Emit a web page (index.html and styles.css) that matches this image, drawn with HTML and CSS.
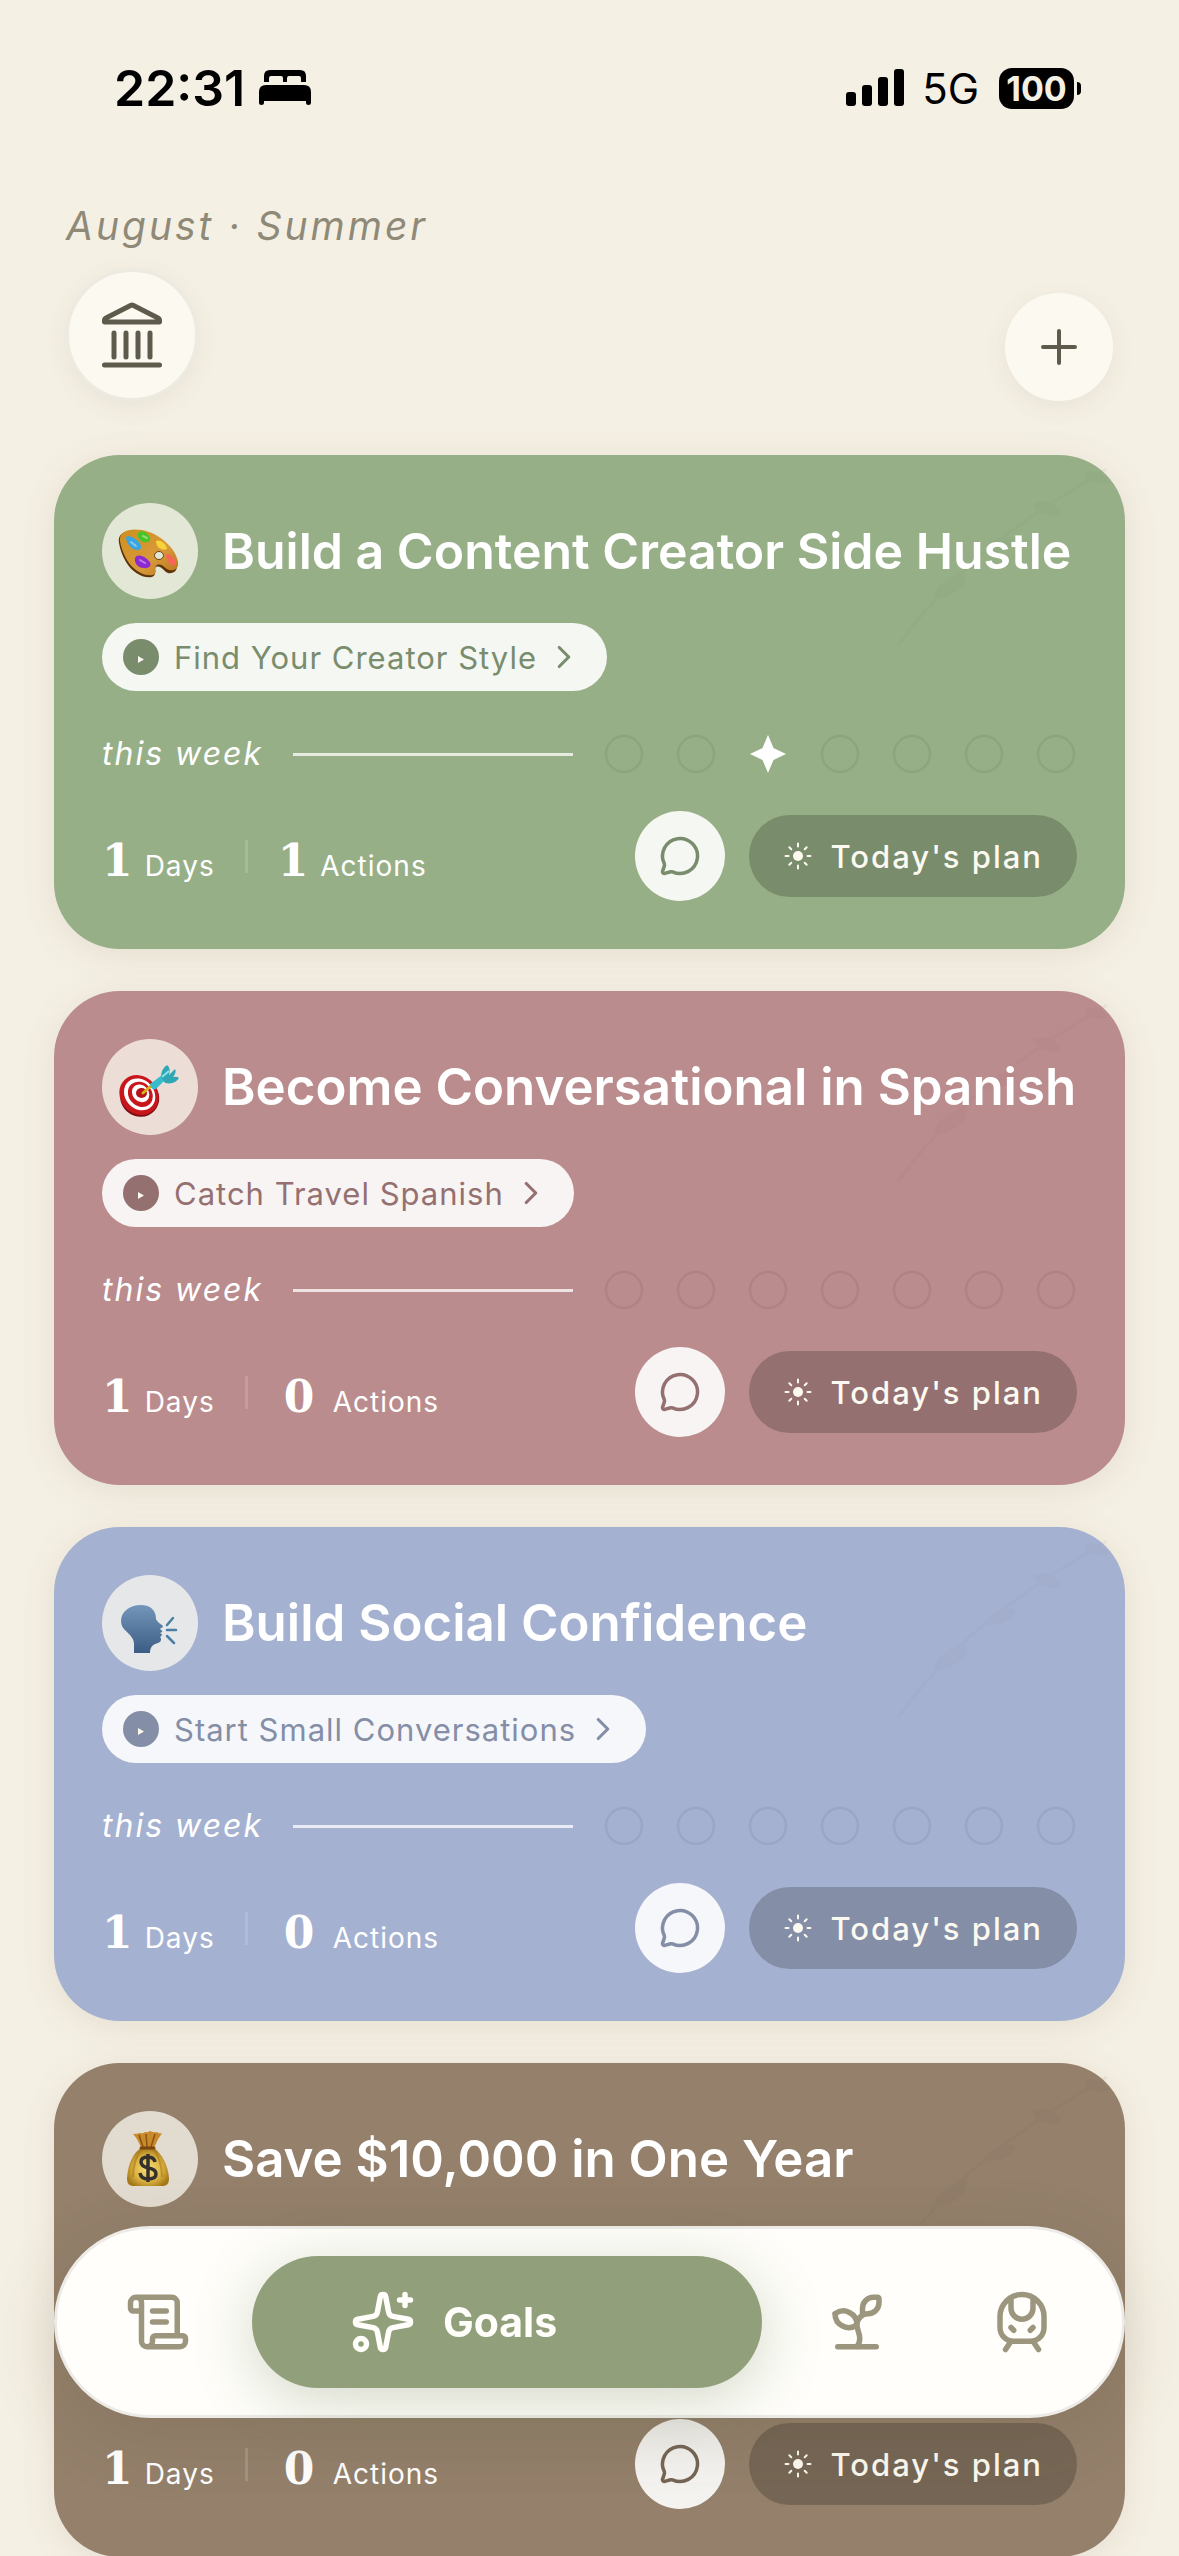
FILE: index.html
```html
<!DOCTYPE html>
<html lang="en">
<head>
<meta charset="utf-8">
<meta name="viewport" content="width=device-width, initial-scale=1">
<title>Goals</title>
<link rel="stylesheet" href="styles.css">
</head>
<body>

<svg class="sprite" aria-hidden="true">
  <symbol id="play" viewBox="0 0 36 36"><path d="M15 17v7l6-3.500z" fill="currentColor"/></symbol>
  <symbol id="chevron" viewBox="0 0 24 24"><path d="m9 18 6-6-6-6" class="line"/></symbol>
  <symbol id="ring" viewBox="0 0 42 42"><circle cx="21" cy="21" r="18" fill="none" stroke="currentColor" stroke-width="2.500"/></symbol>
  <symbol id="star" viewBox="0 0 42 42"><path d="M21 2l5.500 13L39 21l-12.500 6L21 40l-5.500-13L3 21l12.500-6z" fill="currentColor"/></symbol>
  <symbol id="chat" viewBox="0 0 24 24"><path class="line" d="M2.992 16.342a2 2 0 0 1 .094 1.167l-1.065 3.290a1 1 0 0 0 1.236 1.168l3.413-.998a2 2 0 0 1 1.099.092 10 10 0 1 0-4.777-4.719"/></symbol>
  <symbol id="sun" viewBox="0 0 30 30"><circle cx="15" cy="15" r="5" fill="currentColor"/><path class="line" d="M15 2.500v3M15 24.500v3M2.500 15h3M24.500 15h3M6.300 6.300l2 2M21.700 21.700l2 2M6.300 23.700l2-2M21.700 8.300l2-2"/></symbol>
  <symbol id="branch" viewBox="0 0 240 200">
    <path d="M13 191C60 125 110 80 222 14" fill="none" stroke="currentColor" stroke-width="3"/>
    <g fill="currentColor">
      <path d="M50 143c0-13 14-24 32-25 1 12-13 25-32 25z"/>
      <path d="M101 97c3-12 17-18 30-14-2 10-16 17-30 14z"/>
      <path d="M148 50c8-7 25-4 29 9-10 4-25 1-29-9z"/>
      <path d="M199 18c8-4 21 0 25 9-9 3-21 1-25-9z"/>
    </g>
  </symbol>
  <linearGradient id="head-fill" x1="0" y1="0" x2="0" y2="1"><stop offset="0" stop-color="#7496ba"/><stop offset="1" stop-color="#3b5c84"/></linearGradient>
  <radialGradient id="gold" cx=".5" cy=".55" r=".55"><stop offset="0" stop-color="#f7e07e"/><stop offset=".6" stop-color="#dcb442"/><stop offset="1" stop-color="#a5781a"/></radialGradient>
  <linearGradient id="wood" x1="0" y1="0" x2="1" y2="1"><stop offset="0" stop-color="#cf8f1f"/><stop offset=".6" stop-color="#d89a3a"/><stop offset="1" stop-color="#b9741b"/></linearGradient>
</svg>

<div class="status">
  <div class="status-side">
    <span class="clock">22:31</span>
    <svg class="bed" viewBox="0 0 52 36" aria-hidden="true"><path d="M5 12V6q0-6 6-6h30q6 0 6 6v6h-5V8q0-2-2-2h-10q-2 0-2 2v4h-4V8q0-2-2-2H12q-2 0-2 2v4zM0 22q0-7 7-7h38q7 0 7 7v11q0 2-2.500 2T47 33v-2H5v2q0 2-2.500 2T0 33z"/></svg>
  </div>
  <div class="status-side">
    <svg class="signal" viewBox="0 0 58 38" aria-hidden="true"><rect y="23" width="10" height="14" rx="3"/><rect x="16" y="16" width="10" height="21" rx="3"/><rect x="32" y="8" width="10" height="29" rx="3"/><rect x="48" width="10" height="37" rx="3"/></svg>
    <span class="network">5G</span>
    <span class="battery">100</span>
  </div>
</div>

<header class="top">
  <p class="season">August · Summer</p>
  <div class="top-actions">
    <button class="round round-lg" aria-label="Hall">
      <svg class="hall" viewBox="0 0 60 66" aria-hidden="true"><path class="line" d="M29 3.200Q30 2.700 31 3.200L56 16q2 1 1.500 4H2.500q-.500-3 1.500-4zM12 31v24M24 31v24M36 31v24M48 31v24M2.500 63h55"/></svg>
    </button>
    <button class="round" aria-label="Add goal">
      <svg class="plus" viewBox="0 0 36 36" aria-hidden="true"><path class="line" d="M18 2v32M2 18h32"/></svg>
    </button>
  </div>
</header>

<main class="goals">
  <article class="card green">
    <svg class="branch" aria-hidden="true"><use href="#branch"/></svg>
    <div class="card-head">
      <span class="badge"><svg viewBox="0 0 96 96" role="img" aria-label="Palette">
        <path d="M18 39c-2-11 9-14 22-12 17 3 34 18 36 33 1 7-4 10-9 9-5-2-7-8-12-6-4 2 2 8-4 10-9 2-20-5-26-15-4-7-6-13-7-19z" fill="#5c3407" transform="translate(-1 1)"/>
        <path d="M18 38c-1-10 9-13 22-11 17 3 34 18 36 32 1 7-4 9-9 8-5-2-7-7-12-5-4 2 2 8-4 10-9 2-20-5-26-15-4-7-6-13-7-19z" fill="url(#wood)"/>
        <ellipse cx="57" cy="52.500" rx="4.500" ry="4" fill="#e2e6d7" stroke="#6f420c"/>
        <path d="M24 34c4-2 8 1 12 4 4 4 4 9 0 9-5 1-12-6-12-13z" fill="#38a6e0"/>
        <path d="M36 30c4-4 10 0 12 5 1 4-3 5-7 4-4-2-6-5-5-9z" fill="#46c428"/>
        <path d="M54 38c4-2 10 2 11 8-4 2-11-1-11-8z" fill="#f8d43a"/>
        <path d="M33 55c2-5 10-2 14 3 4 4 0 8-5 7-6 0-10-5-9-10z" fill="#8d2bd0"/>
        <path d="M64 51c5 0 10 5 10 11-4 2-10-4-10-11z" fill="#f8645a"/>
        <path d="M29 39l5 4M41 33l4 2M38 57l5 3" stroke="#fff" stroke-opacity=".4" stroke-width="2" stroke-linecap="round"/>
      </svg></span>
      <h2 class="long">Build a Content Creator Side Hustle</h2>
    </div>
    <button class="step"><svg class="play" aria-hidden="true"><use href="#play"/></svg><span>Find Your Creator Style</span><svg class="chevron" aria-hidden="true"><use href="#chevron"/></svg></button>
    <div class="week"><span class="week-label">this week</span><hr>
      <div class="days"><svg><use href="#ring"/></svg><svg><use href="#ring"/></svg><svg class="done"><use href="#star"/></svg><svg><use href="#ring"/></svg><svg><use href="#ring"/></svg><svg><use href="#ring"/></svg><svg><use href="#ring"/></svg></div>
    </div>
    <div class="card-foot">
      <div class="stats"><p class="stat"><b>1</b> <span>Days</span></p><i class="bar"></i><p class="stat"><b>1</b> <span>Actions</span></p></div>
      <button class="chat" aria-label="Chat"><svg aria-hidden="true"><use href="#chat"/></svg></button>
      <button class="plan"><svg aria-hidden="true"><use href="#sun"/></svg>Today's plan</button>
    </div>
  </article>

  <article class="card rose">
    <svg class="branch" aria-hidden="true"><use href="#branch"/></svg>
    <div class="card-head">
      <span class="badge"><svg viewBox="0 0 96 96" role="img" aria-label="Target">
        <ellipse cx="38" cy="58.500" rx="20" ry="19" transform="rotate(42 38 58)" fill="#7c0d12"/>
        <ellipse cx="37" cy="56" rx="21" ry="18.500" transform="rotate(48 37 56)" fill="#c9151c"/>
        <ellipse cx="38" cy="55.500" rx="17" ry="14.500" transform="rotate(48 38 55)" fill="#fff"/>
        <ellipse cx="38.500" cy="55" rx="13.500" ry="11.500" transform="rotate(48 38 55)" fill="#c9151c"/>
        <ellipse cx="39" cy="54.500" rx="9.500" ry="8" transform="rotate(48 39 54)" fill="#fff"/>
        <ellipse cx="39.500" cy="54" rx="5.500" ry="5" fill="#b51219"/>
        <path d="M41 54l9-8" stroke="#d8b51f" stroke-width="3" stroke-linecap="round"/>
        <path d="M48 45l12-9 4 4-10 10q-5 2-6-5z" fill="#38bccb"/>
        <path d="M59 38q0-8 6-12 4 3 2 10l6-6q2 3-2 8 4-1 6 1-4 7-14 5z" fill="#2fa7b4"/>
        <path d="M60 38l7-6" stroke="#8be4ea" stroke-width="2"/>
      </svg></span>
      <h2>Become Conversational in Spanish</h2>
    </div>
    <button class="step"><svg class="play" aria-hidden="true"><use href="#play"/></svg><span>Catch Travel Spanish</span><svg class="chevron" aria-hidden="true"><use href="#chevron"/></svg></button>
    <div class="week"><span class="week-label">this week</span><hr>
      <div class="days"><svg><use href="#ring"/></svg><svg><use href="#ring"/></svg><svg><use href="#ring"/></svg><svg><use href="#ring"/></svg><svg><use href="#ring"/></svg><svg><use href="#ring"/></svg><svg><use href="#ring"/></svg></div>
    </div>
    <div class="card-foot">
      <div class="stats"><p class="stat"><b>1</b> <span>Days</span></p><i class="bar"></i><p class="stat"><b class="zero">0</b> <span>Actions</span></p></div>
      <button class="chat" aria-label="Chat"><svg aria-hidden="true"><use href="#chat"/></svg></button>
      <button class="plan"><svg aria-hidden="true"><use href="#sun"/></svg>Today's plan</button>
    </div>
  </article>

  <article class="card blue">
    <svg class="branch" aria-hidden="true"><use href="#branch"/></svg>
    <div class="card-head">
      <span class="badge"><svg viewBox="0 0 96 96" role="img" aria-label="Speaking head">
        <path d="M32 78V69c0-5-3-8-7-12-4-3-6-7-6-11 0-9 8-16 20-16 10 0 15 6 15 14 1 3 5 5 7 7 0 2-3 2-3 3 1 1 3 2 2 3l-2 1c3 1 2 3 0 4 2 2 1 5-2 6-4 1-8 3-8 10z" fill="url(#head-fill)"/>
        <path d="M65 50l6-7M65 55h9M65 61l7 7" stroke="#4a80a8" stroke-width="2.500" stroke-linecap="round"/>
      </svg></span>
      <h2>Build Social Confidence</h2>
    </div>
    <button class="step"><svg class="play" aria-hidden="true"><use href="#play"/></svg><span>Start Small Conversations</span><svg class="chevron" aria-hidden="true"><use href="#chevron"/></svg></button>
    <div class="week"><span class="week-label">this week</span><hr>
      <div class="days"><svg><use href="#ring"/></svg><svg><use href="#ring"/></svg><svg><use href="#ring"/></svg><svg><use href="#ring"/></svg><svg><use href="#ring"/></svg><svg><use href="#ring"/></svg><svg><use href="#ring"/></svg></div>
    </div>
    <div class="card-foot">
      <div class="stats"><p class="stat"><b>1</b> <span>Days</span></p><i class="bar"></i><p class="stat"><b class="zero">0</b> <span>Actions</span></p></div>
      <button class="chat" aria-label="Chat"><svg aria-hidden="true"><use href="#chat"/></svg></button>
      <button class="plan"><svg aria-hidden="true"><use href="#sun"/></svg>Today's plan</button>
    </div>
  </article>

  <article class="card brown">
    <svg class="branch" aria-hidden="true"><use href="#branch"/></svg>
    <div class="card-head">
      <span class="badge"><svg viewBox="0 0 96 96" role="img" aria-label="Money bag">
        <path d="M39 37q-3-9-8-14 4 0 7-1 3 1 5-1 2 1 5-1 4 2 7 1 2 2 5 1-5 7-8 15z" fill="#c88a2b"/>
        <path d="M41 36l-4-12M45 36l-1-13M49 36l4-13" stroke="#8a5313" stroke-width="1.500"/>
        <path d="M39 37h13c8 6 14 17 15 30 0 6-2 8-7 8H32c-5 0-7-2-7-8 1-14 6-25 14-30z" fill="url(#gold)"/>
        <path d="M31 66q0-16 8-27M60 66q0-16-8-27" stroke="#a97a1c" stroke-opacity=".6" stroke-width="2" fill="none"/>
        <path d="M39 37h13" stroke="#7a4510" stroke-width="3" stroke-linecap="round"/>
        <path d="M46 43v28M53 51q-1-5-7-5-7 0-7 5 0 4 7 6 8 1 8 6 0 5-8 5-7 0-8-6" stroke="#33302e" stroke-width="3.500" fill="none"/>
      </svg></span>
      <h2>Save $10,000 in One Year</h2>
    </div>
    <button class="step" aria-label="Current step"><svg class="play" aria-hidden="true"><use href="#play"/></svg><svg class="chevron" aria-hidden="true"><use href="#chevron"/></svg></button>
    <div class="week"><span class="week-label">this week</span><hr>
      <div class="days"><svg><use href="#ring"/></svg><svg><use href="#ring"/></svg><svg><use href="#ring"/></svg><svg><use href="#ring"/></svg><svg><use href="#ring"/></svg><svg><use href="#ring"/></svg><svg><use href="#ring"/></svg></div>
    </div>
    <div class="card-foot">
      <div class="stats"><p class="stat"><b>1</b> <span>Days</span></p><i class="bar"></i><p class="stat"><b class="zero">0</b> <span>Actions</span></p></div>
      <button class="chat" aria-label="Chat"><svg aria-hidden="true"><use href="#chat"/></svg></button>
      <button class="plan"><svg aria-hidden="true"><use href="#sun"/></svg>Today's plan</button>
    </div>
  </article>
</main>

<nav class="tabs" aria-label="Main">
  <a class="tab" href="#journal" aria-label="Journal"><svg viewBox="0 0 24 24" aria-hidden="true"><path class="line" d="M15 12h-5M15 8h-5M19 17V5a2 2 0 0 0-2-2H4M8 21h12a2 2 0 0 0 2-2v-1a1 1 0 0 0-1-1H11a1 1 0 0 0-1 1v1a2 2 0 1 1-4 0V5a2 2 0 1 0-4 0v2a1 1 0 0 0 1 1h3"/></svg></a>
  <a class="tab current" href="#goals" aria-current="page"><svg viewBox="0 0 24 24" aria-hidden="true"><path class="line" d="M11.017 2.814a1 1 0 0 1 1.966 0l1.051 5.558a2 2 0 0 0 1.594 1.594l5.558 1.051a1 1 0 0 1 0 1.966l-5.558 1.051a2 2 0 0 0-1.594 1.594l-1.051 5.558a1 1 0 0 1-1.966 0l-1.051-5.558a2 2 0 0 0-1.594-1.594l-5.558-1.051a1 1 0 0 1 0-1.966l5.558-1.051a2 2 0 0 0 1.594-1.594zM20 2v4M22 4h-4"/><circle class="line" cx="4" cy="20" r="2"/></svg><span>Goals</span></a>
  <a class="tab" href="#growth" aria-label="Growth"><svg viewBox="0 0 24 24" aria-hidden="true"><path class="line" d="M14 9.536V7a4 4 0 0 1 4-4h1.500a.5.5 0 0 1 .5.5V5a4 4 0 0 1-4 4 4 4 0 0 0-4 4c0 2 1 3 1 5a5 5 0 0 1-1 3M4 9a5 5 0 0 1 8 4 5 5 0 0 1-8-4M5 21h14"/></svg></a>
  <a class="tab" href="#train" aria-label="Train"><svg viewBox="0 0 24 24" aria-hidden="true"><path class="line" d="M8 3.100V7a4 4 0 0 0 8 0V3.100M9 15l-1-1M15 15l1-1M9 19c-2.800 0-5-2.200-5-5v-4a8 8 0 0 1 16 0v4c0 2.800-2.200 5-5 5ZM8 19l-2 3M16 19l2 3"/></svg></a>
</nav>

</body>
</html>
```
FILE: styles.css
```css
* { box-sizing: border-box; }
html { scrollbar-width: none; }
body {
  margin: 0;
  background: #f5f0e4;
  color: #000;
  font-family: Inter, "Liberation Sans", sans-serif;
}
h2, p { margin: 0; }
button {
  border: 0;
  padding: 0;
  font: inherit;
  color: inherit;
  cursor: pointer;
}
svg { display: block; flex: none; }
.sprite { position: absolute; width: 0; height: 0; }
.line {
  fill: none;
  stroke: currentColor;
  stroke-width: 2;
  stroke-linecap: round;
  stroke-linejoin: round;
}

/* status bar */
.status {
  display: flex;
  justify-content: space-between;
  align-items: center;
  height: 176px;
  padding: 0 98px 0 114px;
}
.status-side { display: flex; align-items: center; }
.clock { font-size: 50px; font-weight: 600; }
.bed { width: 52px; height: 36px; margin-left: 14px; }
.signal { width: 58px; height: 38px; margin-right: 18px; }
.network { font-size: 42px; margin-right: 20px; }
.battery {
  position: relative;
  width: 75px;
  border-radius: 13px;
  margin-right: 7px;
  background: #000;
  color: #f5f0e4;
  font-size: 34px;
  font-weight: 700;
  line-height: 41px;
  text-align: center;
}
.battery::after {
  content: "";
  position: absolute;
  left: 78px;
  top: 14px;
  width: 4px;
  height: 13px;
  border-radius: 0 4px 4px 0;
  background: #000;
}

/* header */
.top { padding: 26px 66px 54px; }
.season {
  color: #8f8a78;
  font-size: 39px;
  font-style: italic;
  line-height: 48px;
  letter-spacing: 3px;
}
.top-actions {
  display: flex;
  justify-content: space-between;
  align-items: flex-end;
  margin-top: 19px;
}
.round {
  display: grid;
  place-items: center;
  width: 108px;
  height: 108px;
  border-radius: 50%;
  background: #fcf9f0;
  color: #5f5b4c;
  box-shadow: 0 6px 24px rgba(90, 85, 60, .08);
}
.round-lg {
  width: 132px;
  height: 132px;
  border: 3px solid #edeae1;
}
.hall { width: 60px; height: 66px; }
.hall .line { stroke-width: 5; }
.plus { width: 36px; height: 36px; }
.plus .line { stroke-width: 4; }

/* goal cards */
.goals {
  display: flex;
  flex-direction: column;
  gap: 42px;
  padding: 0 54px;
}
.card {
  position: relative;
  padding: 48px;
  border-radius: 66px;
  background: var(--tone);
  color: #fff;
  box-shadow: 0 6px 36px rgba(110, 90, 60, .11);
}
.green { --tone: #97af87; --deep: #798c6c; }
.rose { --tone: #bb8c8d; --deep: #957070; }
.blue { --tone: #a5b1d0; --deep: #848ea6; }
.brown { --tone: #94806b; --deep: #766655; }
.branch {
  position: absolute;
  top: 0;
  right: 0;
  width: 240px;
  height: 200px;
  color: var(--deep);
  opacity: .08;
}
.card-head {
  position: relative;
  display: flex;
  align-items: center;
  gap: 24px;
}
.badge {
  flex: none;
  width: 96px;
  height: 96px;
  border-radius: 50%;
  background: rgba(252, 249, 240, .75);
}
h2 {
  font-size: 51px;
  font-weight: 600;
  line-height: 64px;
  white-space: nowrap;
}
h2.long { font-size: 50px; }
.step {
  display: flex;
  align-items: center;
  height: 68px;
  margin-top: 24px;
  padding: 0 24px 0 21px;
  border-radius: 34px;
  background: rgba(255, 255, 255, .9);
  color: var(--deep);
  font-size: 31px;
  letter-spacing: 1px;
}
.play {
  width: 36px;
  height: 36px;
  margin-right: 15px;
  border-radius: 50%;
  background: var(--deep);
  color: #fcf9f0;
}
.chevron { width: 38px; height: 38px; margin-left: 8px; }
.week {
  display: flex;
  align-items: center;
  gap: 30px;
  margin-top: 42px;
}
.week-label {
  font-size: 32px;
  font-style: italic;
  line-height: 42px;
  letter-spacing: 2px;
}
.week hr {
  flex: 1;
  height: 3px;
  margin: 0;
  border: 0;
  background: rgba(255, 255, 255, .75);
}
.days { display: flex; gap: 30px; color: var(--deep); }
.days svg { width: 42px; height: 42px; opacity: .3; }
.days .done { color: #fff; opacity: 1; }
.card-foot {
  display: flex;
  align-items: center;
  gap: 24px;
  margin-top: 36px;
}
.stats {
  display: flex;
  align-items: center;
  gap: 30px;
  margin-right: auto;
}
.stat {
  display: flex;
  align-items: baseline;
  gap: 12px;
  padding-top: 10px;
}
.stat b { font: 700 44px/52px "DejaVu Serif", serif; }
.stat .zero { min-width: 43px; text-align: center; }
.stat span { font-size: 28px; letter-spacing: 1px; }
.bar { width: 3px; height: 33px; background: rgba(255, 255, 255, .15); }
.chat {
  display: grid;
  place-items: center;
  width: 90px;
  height: 90px;
  border-radius: 50%;
  background: rgba(255, 255, 255, .9);
  color: var(--deep);
}
.chat svg { width: 42px; height: 42px; }
.plan {
  display: flex;
  align-items: center;
  gap: 18px;
  height: 82px;
  padding: 0 34px;
  border-radius: 41px;
  background: var(--deep);
  color: #fcf9f0;
  font-size: 31px;
  font-weight: 500;
  letter-spacing: 2px;
}
.plan svg { width: 30px; height: 30px; }

/* floating tab bar */
.tabs {
  position: fixed;
  left: 54px;
  right: 54px;
  bottom: 138px;
  display: flex;
  align-items: center;
  height: 192px;
  padding: 0 18px;
  border: 3px solid #edebe7;
  border-radius: 96px;
  background: #fffefa;
  box-shadow: 0 18px 72px rgba(70, 65, 40, .14);
}
.tab {
  display: flex;
  flex: 165;
  justify-content: center;
  align-items: center;
  height: 132px;
  color: #9c967f;
  text-decoration: none;
}
.tab svg { width: 66px; height: 66px; }
.current {
  flex: 412;
  justify-content: flex-start;
  gap: 27px;
  margin: 0 12px;
  padding-left: 98px;
  border-radius: 66px;
  background: #929f7b;
  color: #fffefa;
  font-size: 41px;
  font-weight: 700;
  box-shadow: 0 12px 60px rgba(110, 130, 90, .3);
}
```
